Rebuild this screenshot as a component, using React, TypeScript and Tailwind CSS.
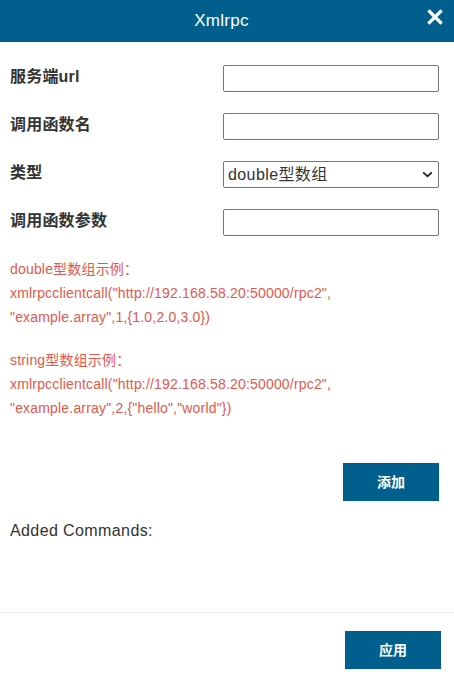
import React, { useState } from 'react';

const font = { fontFamily: '"Liberation Sans", "Noto Sans CJK SC", sans-serif' };

function Field({ label, children }: { label: string; children: React.ReactNode }) {
  return (
    <div className="flex items-center h-[27px] mb-[21px]">
      <label className="w-[213px] shrink-0 text-[16px] font-bold text-[#333] -mt-[3px] tracking-[0.2px]">{label}</label>
      {children}
    </div>
  );
}

export default function App() {
  const [type, setType] = useState('double');

  return (
    <div className="w-[454px] h-[682px] bg-white flex flex-col overflow-hidden" style={font}>
      <div className="h-[42px] bg-[#005f8c] flex items-center justify-center relative shrink-0 pr-[11px]">
        <span className="text-white text-[17px] tracking-[0.3px]">Xmlrpc</span>
        <button className="absolute right-[11px] top-[9px] w-4 h-4 text-white">
          <svg viewBox="0 0 16 16" className="w-4 h-4" fill="none" stroke="currentColor" strokeWidth={3.2} strokeLinecap="square">
            <path d="M2.5 2.5L13.5 13.5M13.5 2.5L2.5 13.5" />
          </svg>
        </button>
      </div>

      <div className="flex-1 px-[10px] pt-[23px]">
        <Field label="服务端url">
          <input className="w-[216px] h-[27px] border border-[#767676] rounded-[2px] outline-none px-1" />
        </Field>
        <Field label="调用函数名">
          <input className="w-[216px] h-[27px] border border-[#767676] rounded-[2px] outline-none px-1" />
        </Field>
        <Field label="类型">
          <div className="relative w-[216px] h-[27px]">
            <select
              value={type}
              onChange={(e) => setType(e.target.value)}
              className="appearance-none w-full h-full border border-[#767676] rounded-[2px] pl-[4px] text-[16px] text-[#333] bg-white outline-none tracking-[0.4px]"
            >
              <option value="double">double型数组</option>
              <option value="string">string型数组</option>
            </select>
            <svg viewBox="0 0 12 8" className="absolute right-[6px] top-[10px] w-[11px] h-[7px] pointer-events-none" fill="none" stroke="#222" strokeWidth={2}>
              <path d="M1 1.5L6 6L11 1.5" />
            </svg>
          </div>
        </Field>
        <Field label="调用函数参数">
          <input className="w-[216px] h-[27px] border border-[#767676] rounded-[2px] outline-none px-1" />
        </Field>

        <div className="text-[14px] leading-[24px] text-[#e4574b] tracking-[0.18px]">
          <p>double型数组示例：</p>
          <p>xmlrpcclientcall("http://192.168.58.20:50000/rpc2",</p>
          <p>"example.array",1,{'{'}1.0,2.0,3.0{'}'})</p>
        </div>
        <div className="text-[14px] leading-[24px] text-[#e4574b] tracking-[0.18px] mt-[19px]">
          <p>string型数组示例：</p>
          <p>xmlrpcclientcall("http://192.168.58.20:50000/rpc2",</p>
          <p>"example.array",2,{'{'}"hello","world"{'}'})</p>
        </div>

        <div className="flex justify-end mt-[43px] pr-[5px]">
          <button className="w-[96px] h-[38px] bg-[#005f8c] text-white text-[14px] font-bold">添加</button>
        </div>

        <p className="text-[16px] leading-[24px] text-[#333] mt-[18px] tracking-[0.4px]">Added Commands:</p>
      </div>

      <div className="h-[70px] border-t border-[#eeeeee] flex items-start justify-end pr-[13px] pt-[18px] shrink-0">
        <button className="w-[96px] h-[38px] bg-[#005f8c] text-white text-[14px] font-bold">应用</button>
      </div>
    </div>
  );
}
